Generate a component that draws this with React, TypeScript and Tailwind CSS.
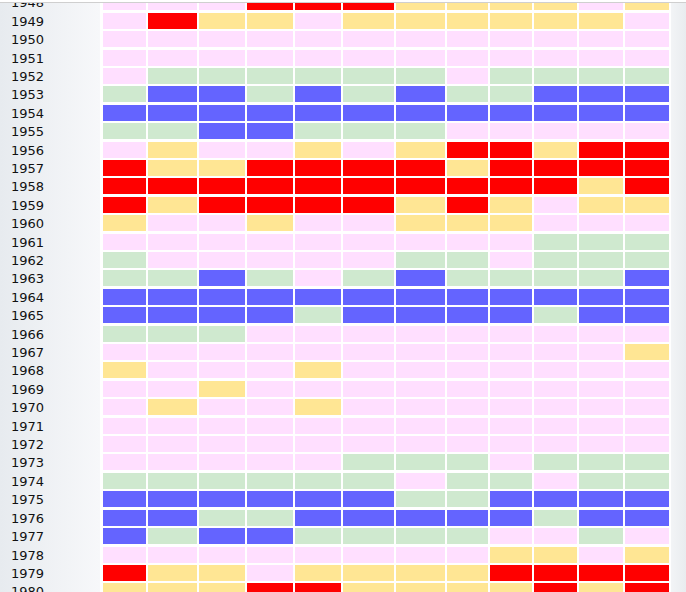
const ROWS: [number, string][] = [
  [1948, "PPPRRRYYYYPY"],
  [1949, "PRYYPYYYYYYP"],
  [1950, "PPPPPPPPPPPP"],
  [1951, "PPPPPPPPPPPP"],
  [1952, "PGGGGGGPGGGG"],
  [1953, "GBBGBGBGGBBB"],
  [1954, "BBBBBBBBBBBB"],
  [1955, "GGBBGGGPPPPP"],
  [1956, "PYPPYPYRRYRR"],
  [1957, "RYYRRRRYRRRR"],
  [1958, "RRRRRRRRRRYR"],
  [1959, "RYRRRRYRYPYY"],
  [1960, "YPPYPPYYYPPP"],
  [1961, "PPPPPPPPPGGG"],
  [1962, "GPPPPPGGPGGG"],
  [1963, "GGBGPGBGGGGB"],
  [1964, "BBBBBBBBBBBB"],
  [1965, "BBBBGBBBBGBB"],
  [1966, "GGGPPPPPPPPP"],
  [1967, "PPPPPPPPPPPY"],
  [1968, "YPPPYPPPPPPP"],
  [1969, "PPYPPPPPPPPP"],
  [1970, "PYPPYPPPPPPP"],
  [1971, "PPPPPPPPPPPP"],
  [1972, "PPPPPPPPPPPP"],
  [1973, "PPPPPGGGPGGG"],
  [1974, "GGGGGGPGGPGG"],
  [1975, "BBBBBBGGBBBB"],
  [1976, "BBGGBBBBBGBB"],
  [1977, "BGBBGGGGPPGP"],
  [1978, "PPPPPPPPYYPY"],
  [1979, "RYYPYYYYRRRR"],
  [1980, "YYYRRYYYYRYR"],
];

// column widths differ a little, like an auto-sized table
const COL_WIDTHS = [
  "w-[43px]",
  "w-[49px]",
  "w-[46px]",
  "w-[46px]",
  "w-[46px]",
  "w-[51px]",
  "w-[49px]",
  "w-[41px]",
  "w-[42px]",
  "w-[43px]",
  "w-[44px]",
  "w-[44px]",
];

const CELL_COLORS: Record<string, string> = {
  P: "bg-[#ffdfff]",
  Y: "bg-[#ffe694]",
  G: "bg-[#cfe9cf]",
  B: "bg-[#6464ff]",
  R: "bg-[#ff0000]",
};

export default function App() {
  return (
    <div className="h-[592px] w-[686px] overflow-hidden bg-white font-['DejaVu_Sans','Liberation_Sans',sans-serif] text-[13px] text-[#111]">
      <div className="h-[2px] bg-white" />
      <div className="h-px bg-[#cfcfcf]" />
      <div className="h-[589px] overflow-hidden">
        <div className="mt-[-8.7px] flex">
          <div className="flex w-[100px] flex-col gap-y-[2.41px] bg-linear-to-r from-[#e7ebef] to-[#f7f8fa]">
            {ROWS.map(([year]) => (
              <div className="h-[16px] pl-[11px] leading-[17px]" key={year}>
                {year}
              </div>
            ))}
          </div>
          <div className="flex flex-col gap-y-[2.41px] pl-[3px] pr-[2px]">
            {ROWS.map(([year, cells]) => (
              <div className="flex gap-x-[2px]" key={year}>
                {cells.split("").map((code, i) => (
                  <div className={`h-[16px] ${COL_WIDTHS[i]} ${CELL_COLORS[code]}`} key={i} />
                ))}
              </div>
            ))}
          </div>
          <div className="flex-1 bg-linear-to-r from-[#f2f4f6] to-[#e9ecef]" />
        </div>
      </div>
    </div>
  );
}
